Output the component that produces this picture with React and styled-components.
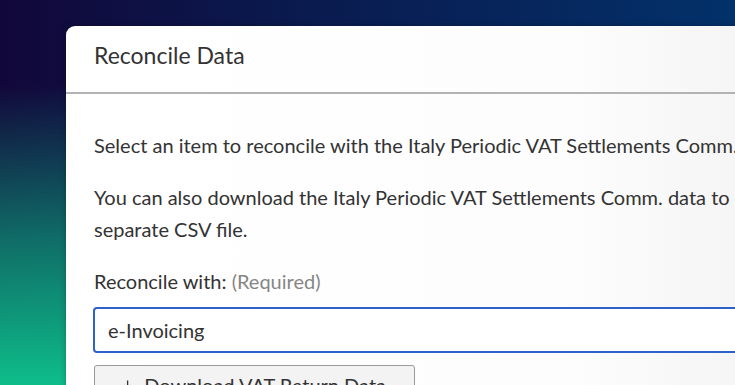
import React from 'react';
import styled, { createGlobalStyle } from 'styled-components';

const GlobalStyle = createGlobalStyle`
  html, body {
    margin: 0;
    padding: 0;
    overflow: hidden;
  }
  body {
    font-family: Lato, "Open Sans", sans-serif;
  }
`;

const Backdrop = styled.div`
  width: 735px;
  height: 385px;
  overflow: hidden;
  box-sizing: border-box;
  padding: 26px 0 0 66px;
  background:
    linear-gradient(to bottom, rgba(14, 190, 138, 0) 22%, rgba(14, 190, 138, 0.55) 62%, #0ebd8a 100%),
    linear-gradient(to right, #12073a 0%, #0a1a4e 40%, #03316a 100%);
`;

const Card = styled.section`
  width: 900px;
  height: 500px;
  border-radius: 9px 0 0 0;
  background: linear-gradient(to right, #ffffff 0%, #fdfdfd 55%, #f1f1f1 85%, #ededed 100%);
  box-shadow: 0 0 6px rgba(0, 0, 0, 0.25);
  color: #333;
`;

const Header = styled.header`
  height: 52px;
  padding: 14px 28px 0 28px;
  border-bottom: 2px solid #b3b3b3;
`;

const Title = styled.h2`
  margin: 0;
  font-size: 23px;
  line-height: 30px;
  font-weight: 400;
  color: #333;
`;

const Body = styled.div`
  padding: 35px 28px 0 28px;
  display: flex;
  flex-direction: column;
`;

const Paragraph = styled.p`
  margin: 0 0 ${(p) => p.$gap || 20}px 0;
  font-size: 20px;
  line-height: 32px;
  color: #333;
  white-space: ${(p) => (p.$nowrap ? 'nowrap' : 'normal')};
  width: ${(p) => (p.$width ? `${p.$width}px` : 'auto')};
`;

const Label = styled.label`
  font-size: 20px;
  line-height: 32px;
  color: #333;
  margin-bottom: 10px;
`;

const Hint = styled.span`
  color: #868686;
`;

const Input = styled.div`
  width: 700px;
  height: 42px;
  border: 2px solid #2f62c6;
  border-radius: 4px;
  display: flex;
  align-items: center;
  padding: 0 13px;
  font-size: 20px;
  color: #333;
  background: #fff;
  margin-left: -1px;
`;

const Button = styled.button`
  margin-top: 12px;
  width: 321px;
  height: 40px;
  border: 1px solid #9a9a9a;
  border-radius: 3px;
  background: #f3f3f3;
  display: flex;
  align-items: center;
  gap: 12px;
  padding: 0 28px;
  font-family: Lato, sans-serif;
  font-size: 20px;
  color: #333;
  white-space: nowrap;
  box-sizing: border-box;
`;

function DownloadIcon() {
  return (
    <svg width="14" height="17" viewBox="0 0 14 17" fill="none" stroke="#333" strokeWidth="2">
      <path d="M7 1v12M2 8l5 5 5-5M1 16h12" />
    </svg>
  );
}

export default function App() {
  return (
    <>
      <GlobalStyle />
      <Backdrop>
        <Card>
          <Header>
            <Title>Reconcile Data</Title>
          </Header>
          <Body>
            <Paragraph $nowrap>
              Select an item to reconcile with the Italy Periodic VAT Settlements Comm.
            </Paragraph>
            <Paragraph $width={700}>
              You can also download the Italy Periodic VAT Settlements Comm. data to a
              separate CSV file.
            </Paragraph>
            <Label>
              Reconcile with: <Hint>(Required)</Hint>
            </Label>
            <Input>e-Invoicing</Input>
            <Button>
              <DownloadIcon />
              Download VAT Return Data
            </Button>
          </Body>
        </Card>
      </Backdrop>
    </>
  );
}
